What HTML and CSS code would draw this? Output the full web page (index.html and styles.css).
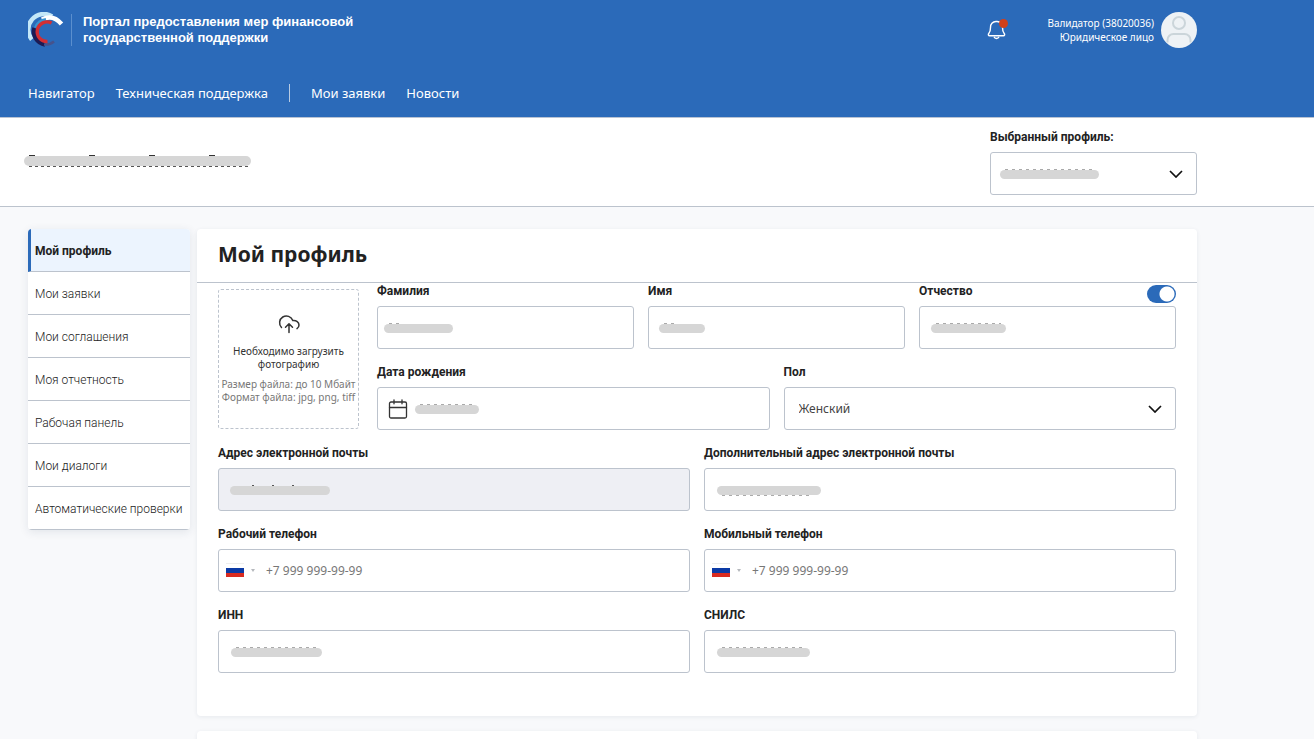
FILE: index.html
```html
<!DOCTYPE html>
<html lang="ru">
<head>
<meta charset="utf-8">
<meta name="viewport" content="width=device-width, initial-scale=1">
<title>Мой профиль</title>
<link rel="stylesheet" href="styles.css">
</head>
<body>
<header class="header">
  <div class="container header-top">
    <a class="brand" href="#">
      <svg class="brand-logo" width="36" height="36" viewBox="0 0 36 36" fill="none">
        <path d="M3.800 27.500A15.600 15.600 0 0 1 24 4.300" stroke="#c3e7f8" stroke-width="4.500"/>
        <path d="M14 7.500C21 4 28 5.500 33.500 12" stroke="#fff" stroke-width="4.500"/>
        <path d="M8 16A12 12 0 0 1 18 8" stroke="#3a93cf" stroke-width="4"/>
        <path d="M6.500 16A13 13 0 0 0 17 32.500" stroke="#1c1b54" stroke-width="4.500"/>
        <path d="M16 32.500Q22 33 26 29.500" stroke="#46538c" stroke-width="2.500"/>
        <path d="M23.500 11A9.800 9.800 0 1 0 19.500 29.500" stroke="#d22e33" stroke-width="3.400"/>
      </svg>
      <span class="brand-name">Портал предоставления мер финансовой<br>государственной поддержки</span>
    </a>
    <div class="account">
      <button class="bell" type="button" aria-label="Уведомления">
        <svg width="22" height="22" viewBox="0 0 22 22" fill="none" stroke="#fff" stroke-width="1.400" stroke-linejoin="round">
          <path d="M4.500 8.500a5.500 5.500 0 0 1 5.500-6h1a5.500 5.500 0 0 1 5.500 6c0 3 .3 4.500 1.700 6 .8 1 .5 2.300-.8 2.300H3.600c-1.300 0-1.600-1.300-.8-2.300 1.400-1.500 1.700-3 1.700-6z"/>
          <path d="M8 17.800c.5 1.300 1.400 1.700 2.500 1.700s2-.4 2.500-1.700"/>
        </svg>
        <span class="bell-dot"></span>
      </button>
      <a class="user" href="#">
        <span class="user-text">Валидатор (38020036)<br>Юридическое лицо</span>
        <svg class="avatar" width="36" height="36" viewBox="0 0 36 36" fill="none" stroke="#cbd5da" stroke-width="2">
          <circle cx="18" cy="18" r="18" fill="#eef2f5" stroke="none"/>
          <circle cx="18" cy="11" r="6"/>
          <path d="M6.500 30.500V28a6 6 0 0 1 6-6h11a6 6 0 0 1 6 6v2.500"/>
        </svg>
      </a>
    </div>
  </div>
  <nav class="container nav">
    <a href="#">Навигатор</a>
    <a href="#">Техническая поддержка</a>
    <span class="nav-line"></span>
    <a href="#">Мои заявки</a>
    <a href="#">Новости</a>
  </nav>
</header>

<section class="profile-bar">
  <div class="container profile-row">
    <div class="person"><span class="mask mask-person"></span></div>
    <div class="profile-pick">
      <label for="profile">Выбранный профиль:</label>
      <div class="control">
        <select id="profile"><option></option></select>
        <span class="mask mask-profile"></span>
        <svg class="chevron" width="14" height="8" viewBox="0 0 14 8" fill="none" stroke="#111" stroke-width="1.700"><path d="M1 1l6 6 6-6"/></svg>
      </div>
    </div>
  </div>
</section>

<div class="container layout">
  <nav class="side">
    <a class="active" href="#">Мой профиль</a>
    <a href="#">Мои заявки</a>
    <a href="#">Мои соглашения</a>
    <a href="#">Моя отчетность</a>
    <a href="#">Рабочая панель</a>
    <a href="#">Мои диалоги</a>
    <a href="#">Автоматические проверки</a>
  </nav>
  <main class="main">
    <section class="panel">
      <h1>Мой профиль</h1>
      <form class="form">
        <input class="toggle" type="checkbox" role="switch" aria-label="Отчество" checked>
        <div class="intro">
          <button class="upload" type="button">
            <svg width="24" height="20" viewBox="0 0 24 20" fill="none" stroke="#333" stroke-width="1.500" stroke-linecap="round" stroke-linejoin="round">
              <path d="M4.500 13.500A6.800 6.800 0 1 1 15.800 6.500c3.500-.4 6.200 1.700 6.200 4.500 0 1.600-.8 2.900-2 3.700"/>
              <path d="M12 18.500V10M8.500 13.200L12 9.700l3.500 3.500"/>
            </svg>
            <span class="upload-title">Необходимо загрузить фотографию</span>
            <span class="upload-note">Размер файла: до 10 Мбайт<br>Формат файла: jpg, png, tiff</span>
          </button>
          <div class="rows">
            <div class="row">
              <div class="field"><label for="last">Фамилия</label>
                <div class="control"><input id="last" type="text"><span class="mask mask-last"></span></div></div>
              <div class="field"><label for="first">Имя</label>
                <div class="control"><input id="first" type="text"><span class="mask mask-first"></span></div></div>
              <div class="field"><label for="middle">Отчество</label>
                <div class="control"><input id="middle" type="text"><span class="mask mask-middle"></span></div></div>
            </div>
            <div class="row">
              <div class="field"><label for="birth">Дата рождения</label>
                <div class="control"><input id="birth" type="text">
                  <svg class="calendar" width="20" height="20" viewBox="0 0 20 20" fill="none" stroke="#333" stroke-width="1.300" stroke-linecap="round"><rect x="1.500" y="3" width="17" height="16" rx="1.500"/><path d="M1.500 8.500h17M6 .8v4M14 .8v4"/></svg>
                  <span class="mask mask-birth"></span></div></div>
              <div class="field"><label for="sex">Пол</label>
                <div class="control"><select id="sex"><option>Женский</option><option>Мужской</option></select>
                  <svg class="chevron" width="14" height="8" viewBox="0 0 14 8" fill="none" stroke="#111" stroke-width="1.700"><path d="M1 1l6 6 6-6"/></svg></div></div>
            </div>
          </div>
        </div>
        <div class="row">
          <div class="field"><label for="mail">Адрес электронной почты</label>
            <div class="control"><input id="mail" type="text" disabled><span class="mask mask-mail"></span></div></div>
          <div class="field"><label for="mail2">Дополнительный адрес электронной почты</label>
            <div class="control"><input id="mail2" type="text"><span class="mask mask-mail2"></span></div></div>
        </div>
        <div class="row">
          <div class="field"><label for="work">Рабочий телефон</label>
            <div class="control"><input class="phone" id="work" type="tel" placeholder="+7 999 999-99-99"><span class="flag"></span></div></div>
          <div class="field"><label for="mobile">Мобильный телефон</label>
            <div class="control"><input class="phone" id="mobile" type="tel" placeholder="+7 999 999-99-99"><span class="flag"></span></div></div>
        </div>
        <div class="row">
          <div class="field"><label for="inn">ИНН</label>
            <div class="control"><input id="inn" type="text"><span class="mask mask-inn"></span></div></div>
          <div class="field"><label for="snils">СНИЛС</label>
            <div class="control"><input id="snils" type="text"><span class="mask mask-snils"></span></div></div>
        </div>
      </form>
    </section>
    <section class="panel panel-next"></section>
  </main>
</div>
</body>
</html>
```

FILE: styles.css
```css
* { box-sizing: border-box; }

body {
  margin: 0;
  background: #f8f9fb;
  color: #222;
  font: 12px/16px "Noto Sans", "Open Sans", sans-serif;
}

a { color: inherit; text-decoration: none; }

button, input, select { font: inherit; color: inherit; }

.container { max-width: 1197px; padding-left: 28px; }

.header {
  background: #2b6ab9;
  border-bottom: 1px solid #b9c3d3;
  color: #fff;
}

.header-top {
  display: flex;
  justify-content: space-between;
  align-items: center;
  padding-top: 12px;
}

.brand { display: flex; align-items: center; gap: 7px; }

.brand-name {
  border-left: 1px solid #5b8fce;
  padding-left: 11px;
  font: 700 13px/16px "Liberation Sans", Arial, sans-serif;
}

.account { display: flex; align-items: center; gap: 39px; }

.bell {
  position: relative;
  display: flex;
  padding: 0;
  border: 0;
  background: none;
}

.bell-dot {
  position: absolute;
  top: 0;
  right: 0;
  width: 9px;
  height: 9px;
  border-radius: 50%;
  background: #d2401a;
}

.user { display: flex; align-items: center; gap: 7px; }

.user-text { text-align: right; font-size: 10px; line-height: 14px; }

.nav {
  display: flex;
  align-items: center;
  gap: 21px;
  padding-top: 35px;
  padding-bottom: 14px;
  font-size: 13px;
  line-height: 20px;
}

.nav-line { width: 1px; height: 18px; background: #b8cbe3; }

.profile-bar { background: #fff; border-bottom: 1px solid #bcc3cd; }

.profile-row {
  display: flex;
  justify-content: space-between;
  align-items: center;
  padding-top: 11px;
  padding-bottom: 11px;
}

.person { position: relative; width: 226px; height: 24px; }

.profile-pick {
  display: flex;
  flex-direction: column;
  gap: 7px;
  width: 207px;
}

label { font: 700 12px/16px Roboto, sans-serif; }

.control { position: relative; }

.control input, .control select {
  display: block;
  width: 100%;
  height: 43px;
  padding: 0 14px;
  border: 1px solid #bcc3cd;
  border-radius: 3px;
  background: #fff;
  color: #444;
  appearance: none;
}

.control input:disabled { background: #eeeff4; }

.control .phone { padding-left: 47px; }

.phone::placeholder { color: #777; }

.chevron { position: absolute; top: 18px; right: 14px; pointer-events: none; }

.calendar { position: absolute; top: 12px; left: 11px; }

.mask {
  position: absolute;
  top: 18px;
  left: 13px;
  height: 9px;
  border-radius: 5px;
  background: #d6d6d6;
}

/* Tips of the covered characters that show along the edge of a mask */
.mask::before {
  content: "";
  position: absolute;
  top: -1px;
  left: 5px;
  right: 5px;
  height: 1px;
  background: repeating-linear-gradient(90deg, #aaa 0 3px, transparent 3px 7px);
}

.mask-last::before { right: 54px; }
.mask-first::before { right: 30px; }
.mask-mail::before { left: 22px; right: 32px; background: repeating-linear-gradient(90deg, #555 0 2px, transparent 2px 20px); }
.mask-mail2::before { top: 9px; right: 12px; }

.mask-person { top: 6px; left: -4px; width: 227px; height: 10px; }
.mask-person::before, .mask-person::after {
  left: 5px;
  right: 3px;
  height: 1px;
  background: repeating-linear-gradient(90deg, #555 0 3px, transparent 3px 6px);
}
.mask-person::before { background: repeating-linear-gradient(90deg, #333 0 6px, transparent 6px 60px); }
.mask-person::after { content: ""; position: absolute; top: 10px; }
.mask-profile { left: 10px; width: 99px; }
.mask-last { left: 7px; width: 69px; }
.mask-first { left: 11px; width: 46px; }
.mask-middle { left: 12px; width: 75px; }
.mask-birth { left: 38px; width: 64px; }
.mask-mail { left: 12px; width: 100px; }
.mask-mail2 { width: 104px; }
.mask-inn { width: 91px; }
.mask-snils { width: 93px; }

/* Russian tricolour with the country drop-down arrow beside it */
.flag {
  position: absolute;
  top: 14px;
  left: 8px;
  width: 18px;
  height: 14px;
  border-top: 1px solid #eee;
  background: linear-gradient(#fff 0 4px, #0b3aa5 4px 9px, #d92b21 9px);
}

.flag::after {
  content: "";
  position: absolute;
  top: 5px;
  left: 25px;
  border: 2px solid transparent;
  border-top: 3px solid #b5b8bd;
}

.layout {
  display: flex;
  align-items: flex-start;
  gap: 7px;
  padding-top: 22px;
}

.side {
  flex: none;
  width: 162px;
  border-radius: 4px;
  overflow: hidden;
  background: #fff;
  box-shadow: 0 2px 10px rgba(30, 50, 80, .1);
}

.side a {
  display: block;
  padding: 14px 0 12px 7px;
  border-bottom: 1px solid #bcc3cd;
  font: 300 12px/16px Roboto, sans-serif;
  white-space: nowrap;
  color: #222;
}

.side .active {
  padding-left: 4px;
  border-left: 3px solid #2b6ab9;
  background: #ecf4fe;
  font-weight: 700;
  color: #222;
}

.main { flex: 1; min-width: 0; }

.panel {
  margin-bottom: 15px;
  border-radius: 4px;
  background: #fff;
  box-shadow: 0 1px 4px rgba(30, 50, 80, .08);
}

.panel-next { height: 60px; }

h1 {
  margin: 0;
  padding: 10px 21px 13px;
  border-bottom: 1px solid #bcc3cd;
  font-size: 21px;
  line-height: 30px;
  font-weight: 700;
}

.form {
  position: relative;
  display: flex;
  flex-direction: column;
  gap: 15px;
  padding: 0 21px 43px;
}

.toggle {
  position: absolute;
  top: 2px;
  right: 21px;
  width: 29px;
  height: 18px;
  margin: 0;
  border-radius: 9px;
  background: radial-gradient(circle at 20px 9px, #fff 7px, #2b6ab9 8px);
  appearance: none;
}

.intro { display: flex; align-items: flex-start; gap: 18px; }

.upload {
  flex: none;
  display: flex;
  flex-direction: column;
  align-items: center;
  justify-content: center;
  width: 141px;
  height: 140px;
  margin: 6px 0 0;
  padding: 0;
  border: 1px dashed #bcc3cd;
  border-radius: 3px;
  background: #fff;
  font-size: 10px;
  line-height: 13px;
}

.upload-title { width: 116px; margin: 11px 0 7px; color: #333; }

.upload-note { color: #777; white-space: nowrap; }

.rows {
  flex: 1;
  min-width: 0;
  display: flex;
  flex-direction: column;
  gap: 15px;
}

.row { display: flex; gap: 14px; }

.field {
  flex: 1;
  min-width: 0;
  display: flex;
  flex-direction: column;
  gap: 7px;
}
```
